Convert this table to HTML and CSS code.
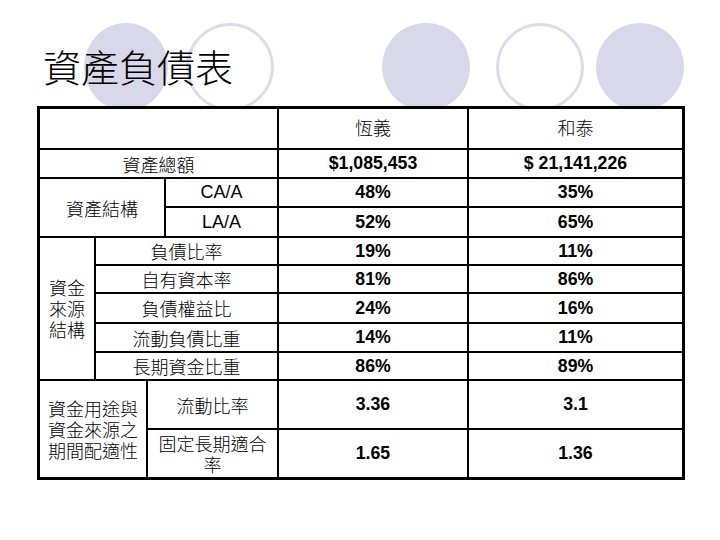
FILE: index.html
```html
<!DOCTYPE html>
<html lang="zh-Hant">
<head>
<meta charset="utf-8">
<title>資產負債表</title>
<link rel="stylesheet" href="styles.css">
</head>
<body>
<div class="slide">
  <header class="head">
    <div class="deco">
      <span class="dot fill first"></span>
      <span class="dot ring second"></span>
      <span class="dot fill third"></span>
      <span class="dot ring fourth"></span>
      <span class="dot fill fifth"></span>
    </div>
    <h1 class="title">資產負債表</h1>
  </header>

  <div class="sheet">
    <div class="cell c1-5"></div>
    <div class="cell cjk head-cell">恆義</div>
    <div class="cell cjk head-cell">和泰</div>

    <div class="cell cjk c1-5">資產總額</div>
    <div class="cell num">$1,085,453</div>
    <div class="cell num">$ 21,141,226</div>

    <div class="cell cjk c1-4 r2">資產結構</div>
    <div class="cell latin">CA/A</div>
    <div class="cell num">48%</div>
    <div class="cell num">35%</div>
    <div class="cell latin">LA/A</div>
    <div class="cell num">52%</div>
    <div class="cell num">65%</div>

    <div class="cell cjk stack r5"><span class="ln">資金</span><span class="ln">來源</span><span class="ln">結構</span></div>
    <div class="cell cjk c2-5">負債比率</div>
    <div class="cell num">19%</div>
    <div class="cell num">11%</div>
    <div class="cell cjk c2-5">自有資本率</div>
    <div class="cell num">81%</div>
    <div class="cell num">86%</div>
    <div class="cell cjk c2-5">負債權益比</div>
    <div class="cell num">24%</div>
    <div class="cell num">16%</div>
    <div class="cell cjk c2-5">流動負債比重</div>
    <div class="cell num">14%</div>
    <div class="cell num">11%</div>
    <div class="cell cjk c2-5">長期資金比重</div>
    <div class="cell num">86%</div>
    <div class="cell num">89%</div>

    <div class="cell cjk stack c1-3 r2"><span class="ln">資金用途與</span><span class="ln">資金來源之</span><span class="ln">期間配適性</span></div>
    <div class="cell cjk c3-5">流動比率</div>
    <div class="cell num">3.36</div>
    <div class="cell num">3.1</div>
    <div class="cell cjk stack c3-5"><span class="ln">固定長期適合</span><span class="ln">率</span></div>
    <div class="cell num">1.65</div>
    <div class="cell num">1.36</div>
  </div>
</div>
</body>
</html>
```

FILE: styles.css
```css
html, body {
  margin: 0;
  padding: 0;
  background: #ffffff;
}

.slide {
  width: 720px;
  height: 540px;
  position: relative;
  overflow: hidden;
}

.head {
  position: relative;
  height: 106px;
}

.deco {
  position: absolute;
  top: 23px;
  left: 0;
  display: flex;
  align-items: flex-start;
}

.dot {
  display: block;
  box-sizing: border-box;
  width: 88px;
  height: 88px;
  border-radius: 50%;
}

.dot.fill {
  background: #d8d8ea;
}

.dot.ring {
  border: 3px solid #dcdcea;
  background: #ffffff;
}

.dot.first { margin-left: 84px; width: 84px; }
.dot.second { margin-left: 18px; }
.dot.third { margin-left: 108px; }
.dot.fourth { margin-left: 26px; }
.dot.fifth { margin-left: 12px; }

.title {
  position: relative;
  margin: 0;
  padding: 44px 0 0 43px;
  font-family: "Noto Sans CJK TC", "Noto Sans CJK SC", sans-serif;
  font-weight: 300;
  font-size: 38px;
  line-height: 44px;
  color: #000000;
}

.sheet {
  position: relative;
  margin-left: 37px;
  width: 648px;
  box-sizing: border-box;
  border: 3px solid #000000;
  background: #000000;
  display: grid;
  grid-template-columns: 54px 50px 16px 111px 188px 213px;
  grid-template-rows: 39px 27px 27px 28px 26px 26px 28px 27px 26px 47px 47px;
  gap: 2px;
}

.cell {
  background: #ffffff;
  display: flex;
  align-items: center;
  justify-content: center;
  text-align: center;
  color: #000000;
}

.head-cell {
  padding-bottom: 4px;
}

.cjk {
  font-family: "Noto Sans CJK TC", "Noto Sans CJK SC", sans-serif;
  font-weight: 300;
  font-size: 18px;
  line-height: 20px;
}

.stack {
  flex-direction: column;
}

.ln {
  display: block;
  height: 21px;
  line-height: 21px;
  white-space: nowrap;
}

.latin {
  font-family: "Liberation Sans", Arial, sans-serif;
  font-size: 18px;
}

.num {
  font-family: "Liberation Sans", Arial, sans-serif;
  font-weight: 700;
  font-size: 17.7px;
}

.c1-5 { grid-column: 1 / 5; }
.c1-4 { grid-column: 1 / 4; }
.c1-3 { grid-column: 1 / 3; }
.c2-5 { grid-column: 2 / 5; }
.c3-5 { grid-column: 3 / 5; }
.r2 { grid-row: span 2; }
.r5 { grid-row: span 5; }
```
